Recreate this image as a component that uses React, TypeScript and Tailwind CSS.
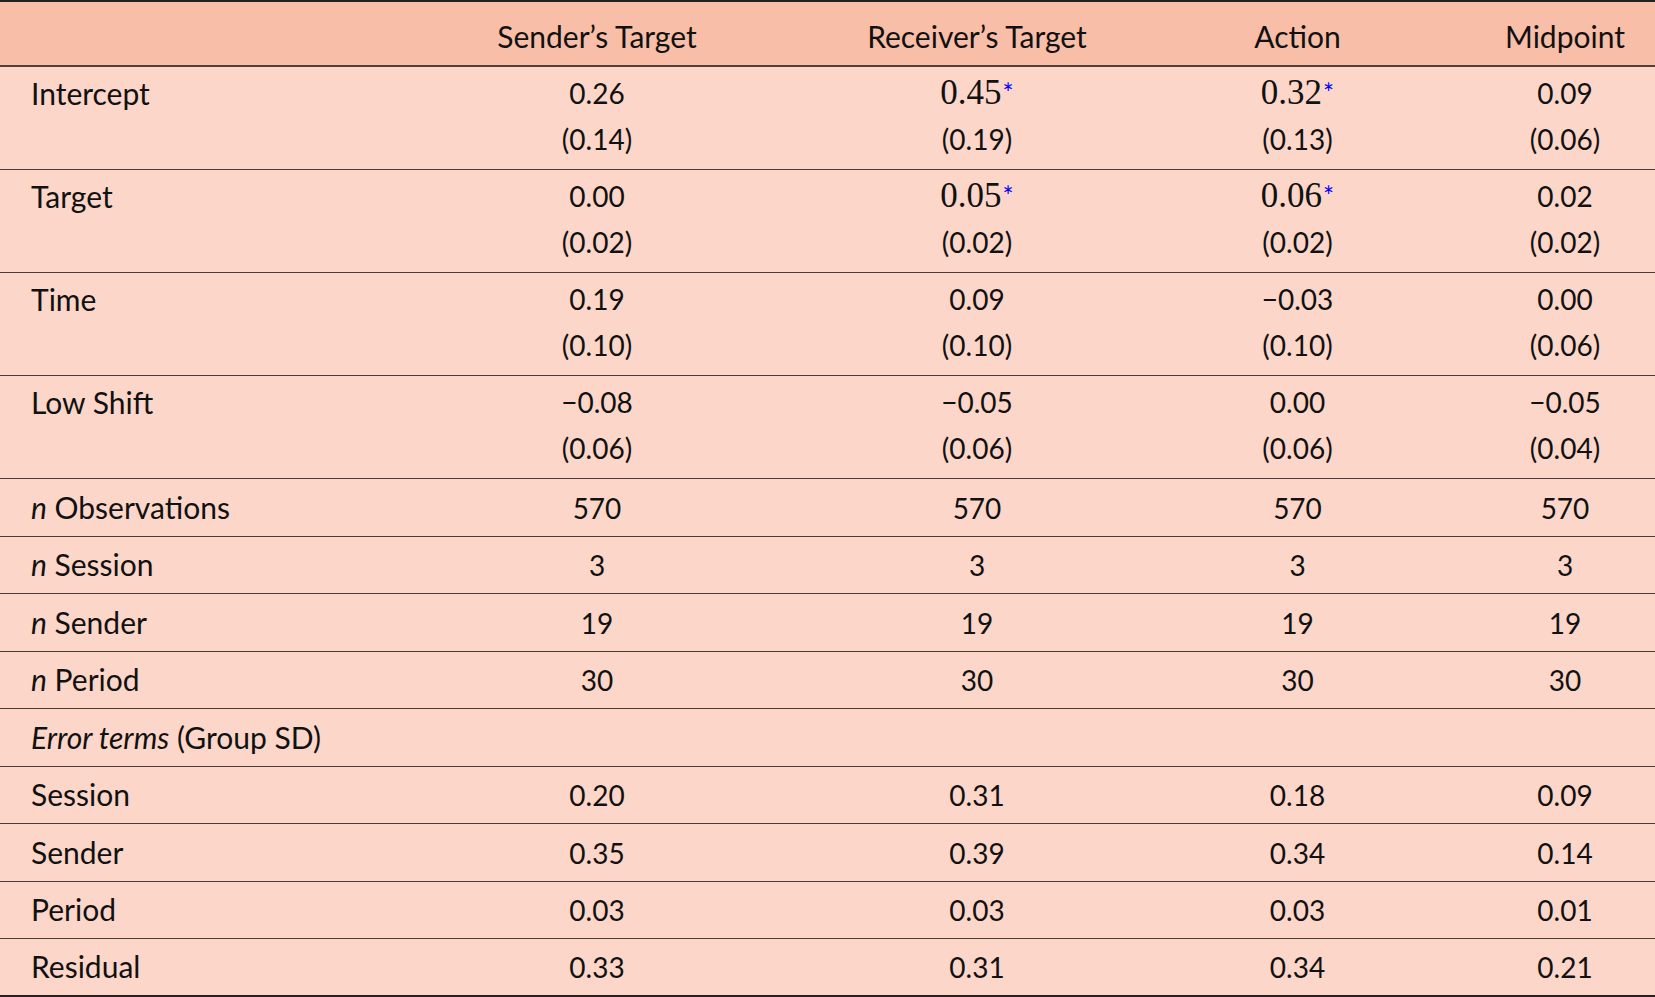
import React from 'react';

type Cell = string | { v: string; star: true };

interface Row {
  label: React.ReactNode;
  main: Cell[];
  se?: string[];
}

const cols = 'grid grid-cols-[360px_474px_286px_355px_180px]';

const rows: Row[] = [
  { label: 'Intercept', main: ['0.26', { v: '0.45', star: true }, { v: '0.32', star: true }, '0.09'], se: ['(0.14)', '(0.19)', '(0.13)', '(0.06)'] },
  { label: 'Target', main: ['0.00', { v: '0.05', star: true }, { v: '0.06', star: true }, '0.02'], se: ['(0.02)', '(0.02)', '(0.02)', '(0.02)'] },
  { label: 'Time', main: ['0.19', '0.09', '\u22120.03', '0.00'], se: ['(0.10)', '(0.10)', '(0.10)', '(0.06)'] },
  { label: 'Low Shift', main: ['\u22120.08', '\u22120.05', '0.00', '\u22120.05'], se: ['(0.06)', '(0.06)', '(0.06)', '(0.04)'] },
  { label: <><i>n</i> Observations</>, main: ['570', '570', '570', '570'] },
  { label: <><i>n</i> Session</>, main: ['3', '3', '3', '3'] },
  { label: <><i>n</i> Sender</>, main: ['19', '19', '19', '19'] },
  { label: <><i>n</i> Period</>, main: ['30', '30', '30', '30'] },
  { label: <><i>Error terms</i> (Group SD)</>, main: ['', '', '', ''] },
  { label: 'Session', main: ['0.20', '0.31', '0.18', '0.09'] },
  { label: 'Sender', main: ['0.35', '0.39', '0.34', '0.14'] },
  { label: 'Period', main: ['0.03', '0.03', '0.03', '0.01'] },
  { label: 'Residual', main: ['0.33', '0.31', '0.34', '0.21'] },
];

const Value: React.FC<{ cell: Cell }> = ({ cell }) => {
  if (typeof cell === 'string') return <span className="text-[28px]">{cell}</span>;
  return (
    <span className="whitespace-nowrap inline-flex items-start">
      <span className="font-[family-name:Liberation_Serif,serif] text-[35px]">{cell.v}</span>
      <span className="text-[#0000ff] text-[26px] leading-none mt-[10px] ml-[1px]">*</span>
    </span>
  );
};

export default function App() {
  return (
    <div className="w-[1655px] h-[997px] bg-[#fcd6c9] font-[Lato,sans-serif] text-[30px] text-[#111] overflow-hidden">
      <div className={`${cols} h-[67px] bg-[#f9bea8] border-t-2 border-b-2 border-t-[#222] border-b-[#4f403b] items-center pt-[5px]`}>
        <div />
        <div className="text-center">Sender’s Target</div>
        <div className="text-center">Receiver’s Target</div>
        <div className="text-center">Action</div>
        <div className="text-center">Midpoint</div>
      </div>
      {rows.map((r, i) => {
        const last = i === rows.length - 1;
        const border = last ? 'border-b-2 border-b-[#222]' : 'border-b border-b-[#4a3c37]';
        if (r.se) {
          return (
            <div key={i} className={`${cols} h-[103px] leading-[46px] pt-[3px] ${border}`}>
              <div className="pl-[31px]">{r.label}</div>
              {r.main.map((c, j) => (
                <div key={j} className="flex flex-col items-center">
                  <div className="h-[46px] flex items-center">
                    <Value cell={c} />
                  </div>
                  <span className="text-[28px]">{r.se![j]}</span>
                </div>
              ))}
            </div>
          );
        }
        return (
          <div key={i} className={`${cols} h-[57.5px] items-center ${border}`}>
            <div className="pl-[31px] whitespace-nowrap">{r.label}</div>
            {r.main.map((c, j) => (
              <div key={j} className="text-center">
                <Value cell={c} />
              </div>
            ))}
          </div>
        );
      })}
    </div>
  );
}
